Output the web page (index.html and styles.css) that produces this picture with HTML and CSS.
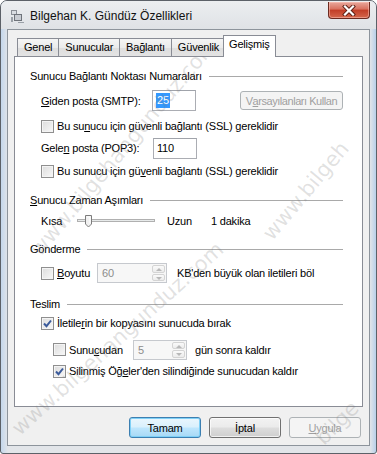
FILE: index.html
```html
<!DOCTYPE html>
<html lang="tr">
<head>
  <meta charset="UTF-8" />
  <title>Bilgehan K. Gündüz Özellikleri</title>
  <link rel="stylesheet" href="styles.css">
</head>
<body>
  <div class="window">
    <!-- Title bar -->
    <div class="titlebar">
      <svg class="titlebar__icon" width="16" height="16" viewBox="0 0 16 16">
        <rect x="1" y="2" width="6" height="5" fill="#8a8f96"/>
        <rect x="2" y="3" width="4" height="3" fill="#d9dde2"/>
        <rect x="4" y="6" width="8" height="7" fill="#6e737a"/>
        <rect x="5" y="7" width="6" height="5" fill="#c8ccd2"/>
        <rect x="1" y="9" width="2" height="5" fill="#9aa0a7"/>
        <rect x="8" y="14" width="6" height="1" fill="#9aa0a7"/>
      </svg>
      <span class="titlebar__text">Bilgehan K. Gündüz Özellikleri</span>
      <div class="titlebar__close">
        <svg width="14" height="11" viewBox="0 0 14 11">
          <path d="M3 1.5 L11 9.5 M11 1.5 L3 9.5" stroke="#5a1d12" stroke-width="4" stroke-linecap="square"/>
          <path d="M3 1.5 L11 9.5 M11 1.5 L3 9.5" stroke="#ffffff" stroke-width="2.2" stroke-linecap="square"/>
        </svg>
      </div>
    </div>

    <!-- Client area -->
    <div class="client">
      <div class="tabs">
        <div class="tab">Genel</div>
        <div class="tab">Sunucular</div>
        <div class="tab">Bağlantı</div>
        <div class="tab">Güvenlik</div>
        <div class="tab tab--active">Gelişmiş</div>
      </div>

      <div class="panel">
        <!-- Port numbers -->
        <div class="group group--first">Sunucu Bağlantı Noktası Numaraları</div>
        <div class="row row--port">
          <span class="row__label"><u>G</u>iden posta (SMTP):</span>
          <span class="field field--port"><span class="field__sel">25</span></span>
          <span class="btn btn--disabled btn--defaults">V<u>a</u>rsayılanları Kullan</span>
        </div>
        <div class="row row--check">
          <span class="check"></span>
          <span>Bu su<u>n</u>ucu için güvenli bağlantı (SSL) gereklidir</span>
        </div>
        <div class="row row--port2">
          <span class="row__label">Gele<u>n</u> posta (POP3):</span>
          <span class="field field--port">110</span>
        </div>
        <div class="row row--check2">
          <span class="check"></span>
          <span>Bu sunucu için gü<u>v</u>enli bağlantı (SSL) gereklidir</span>
        </div>

        <!-- Timeouts -->
        <div class="group group--timeout"><span><u>S</u>unucu Zaman Aşımları</span></div>
        <div class="row row--slider">
          <span class="slider__min">Kısa</span>
          <svg class="slider" width="82" height="14" viewBox="0 0 82 14">
            <rect x="1.5" y="5.5" width="77" height="2" fill="#e7eaea" stroke="#b0b0b0" stroke-width="1"/>
            <path d="M9.5 1.5 H15.5 V10 L12.5 13 L9.5 10 Z" fill="#f1f1f1" stroke="#7c7c7c" stroke-width="1"/>
            <path d="M11 3 H14 V9.5" fill="none" stroke="#ffffff" stroke-width="1"/>
          </svg>
          <span class="slider__max">Uzun</span>
          <span class="slider__value">1 dakika</span>
        </div>

        <!-- Sending -->
        <div class="group group--send">Gönderme</div>
        <div class="row row--size">
          <span class="check"></span>
          <span class="row__text--size"><u>B</u>oyutu</span>
          <span class="spin spin--size">
            <span class="spin__value">60</span>
            <span class="spin__buttons"><span class="spin__up"></span><span class="spin__down"></span></span>
          </span>
          <span class="row__after">KB'den büyük olan iletileri böl</span>
        </div>

        <!-- Delivery -->
        <div class="group group--deliver">Teslim</div>
        <div class="row row--keep">
          <span class="check check--on"></span>
          <span>İletile<u>r</u>in bir kopyasını sunucuda bırak</span>
        </div>
        <div class="row row--days">
          <span class="check"></span>
          <span class="row__text--days">Sunu<u>c</u>udan</span>
          <span class="spin spin--days">
            <span class="spin__value">5</span>
            <span class="spin__buttons"><span class="spin__up"></span><span class="spin__down"></span></span>
          </span>
          <span class="row__after--days">gün sonra kaldır</span>
        </div>
        <div class="row row--deleted">
          <span class="check check--on"></span>
          <span>Silinmiş Öğ<u>e</u>ler'den silindiğinde sunucudan kaldır</span>
        </div>
      </div>

      <div class="actions">
        <span class="btn btn--default">Tamam</span>
        <span class="btn">İptal</span>
        <span class="btn btn--disabled"><u>U</u>ygula</span>
      </div>
    </div>

    <!-- Watermark -->
    <span class="watermark watermark--a">www.bilgehangunduz.com</span>
    <span class="watermark watermark--b">www.bilgehangunduz.com</span>
    <span class="watermark watermark--c">www.bilgeh</span>
    <span class="watermark watermark--d">bilge</span>
  </div>
</body>
</html>
```

FILE: styles.css
```css
/* Base */
* {
  box-sizing: border-box;
}
body {
  margin: 0;
  width: 377px;
  height: 454px;
  overflow: hidden;
  font-family: "Liberation Sans", Arial, sans-serif;
  font-size: 11px;
  letter-spacing: -0.2px;
  color: #000;
  background: #ffffff;
}
u {
  text-decoration: underline;
  text-underline-offset: 1px;
}

/* Window frame */
.window {
  position: relative;
  width: 377px;
  height: 454px;
  display: flex;
  flex-direction: column;
  padding: 0 6px 7px;
  border: 1px solid #5c6168;
  border-radius: 7px 7px 3px 3px;
  background: linear-gradient(90deg, #c4d7ec 0, #e2e5e9 7px, #e2e5e9 369px, #b9d0ea 100%);
  overflow: hidden;
}
.titlebar {
  height: 28px;
  display: flex;
  align-items: center;
  margin: 0 -6px;
  padding: 0 6px 0 9px;
  background: linear-gradient(#eceef0, #dfe2e6);
}
.titlebar__icon {
  flex: none;
  margin-top: 2px;
}
.titlebar__text {
  margin-left: 4px;
  margin-top: 2px;
  font-size: 12px;
  letter-spacing: 0;
  color: #111;
}
.titlebar__close {
  margin-left: auto;
  margin-bottom: 9px;
  width: 42px;
  height: 17px;
  display: flex;
  align-items: center;
  justify-content: center;
  border: 1px solid #6b2a20;
  border-top: none;
  border-radius: 0 0 4px 4px;
  background: linear-gradient(#e8a89c, #d8705e 45%, #c23d26 50%, #d4674c);
  box-shadow: inset 0 0 0 1px rgba(255, 200, 190, 0.5);
}

/* Client area */
.client {
  flex: 1;
  display: flex;
  flex-direction: column;
  padding: 5px 6px 7px;
  border: 1px solid #8d949c;
  background: #f0f0f0;
}

/* Tabs */
.tabs {
  height: 21px;
  display: flex;
  align-items: flex-end;
  padding-left: 3px;
  position: relative;
  z-index: 1;
}
.tab {
  height: 18px;
  padding: 0 6px;
  margin-right: -1px;
  line-height: 17px;
  border: 1px solid #898c95;
  border-bottom: none;
  background: linear-gradient(#f5f5f5, #ebebeb 50%, #dedede 50%, #e3e3e3);
  color: #000;
}
.tab--active {
  height: 22px;
  margin-left: -2px;
  margin-bottom: -1px;
  padding: 0 5px;
  line-height: 17px;
  background: #ffffff;
}

/* Tab panel */
.panel {
  height: 351px;
  display: flex;
  flex-direction: column;
  padding: 10px 19px 0 15px;
  border: 1px solid #898c95;
  background: #ffffff;
}

/* Group headings with a rule */
.group {
  height: 16px;
  display: flex;
  align-items: center;
  gap: 7px;
  line-height: 16px;
  white-space: nowrap;
}
.group::after {
  content: "";
  flex: 1;
  height: 1px;
  background: #a9a9a9;
}
.group--first { margin-top: 1px; }
.group--timeout { margin-top: 11px; }
.group--send { margin-top: 10px; }
.group--deliver { margin-top: 13px; }

/* Rows */
.row {
  display: flex;
  align-items: center;
  padding-left: 11px;
  white-space: nowrap;
  height: 20px;
}
.row--port { height: 23px; margin-top: 5px; }
.row--check { margin-top: 4px; }
.row--port2 { height: 22px; margin-top: 1px; }
.row--check2 { margin-top: 2px; }
.row--slider { margin-top: 3px; }
.row--size { margin-top: 6px; }
.row--keep { margin-top: 1px; }
.row--days { height: 21px; margin-top: 6px; padding-left: 23px; }
.row--deleted { margin-top: 1px; padding-left: 23px; }

.row__label {
  width: 112px;
}
.row__text--size {
  width: 40px;
}
.row__text--days {
  width: 64px;
}
.row__after {
  margin-left: 10px;
}
.row__after--days {
  margin-left: 8px;
}

/* Checkbox */
.check {
  flex: none;
  width: 13px;
  height: 13px;
  margin-right: 3px;
  border: 1px solid #8f8f8f;
  background: linear-gradient(135deg, #dcdcdc, #f8f8f8);
  box-shadow: inset 0 0 0 1px #f4f4f4;
}
.check--on {
  background: url("data:image/svg+xml,%3Csvg xmlns='http://www.w3.org/2000/svg' width='11' height='11'%3E%3Cpath d='M2 5.5 L4.5 8.2 L9 2.5' fill='none' stroke='%233b5b9b' stroke-width='2'/%3E%3C/svg%3E") center no-repeat, linear-gradient(135deg, #dcdcdc, #f8f8f8);
}

/* Edit fields */
.field {
  height: 21px;
  display: flex;
  align-items: center;
  padding-left: 3px;
  border: 1px solid #abadb3;
  border-top-color: #a0a3aa;
  background: #ffffff;
}
.field--port {
  width: 44px;
}
.field__sel {
  background: #3399ff;
  color: #ffffff;
  padding: 0 1px;
  line-height: 15px;
}

/* Spin boxes (disabled) */
.spin {
  height: 20px;
  display: flex;
  border: 1px solid #c6c9ce;
  background: #f7f7f7;
  color: #8c8c8c;
}
.spin--size {
  width: 70px;
}
.spin--days {
  width: 54px;
}
.spin__value {
  flex: 1;
  padding-left: 4px;
  line-height: 18px;
}
.spin__buttons {
  width: 15px;
  display: flex;
  flex-direction: column;
  gap: 1px;
  padding: 1px;
}
.spin__up,
.spin__down {
  flex: 1;
  position: relative;
  border: 1px solid #d4d4d4;
  border-radius: 2px;
  background: linear-gradient(#fafafa, #ececec);
}
.spin__up::after,
.spin__down::after {
  content: "";
  position: absolute;
  left: 3px;
  top: 2px;
  border-left: 3px solid transparent;
  border-right: 3px solid transparent;
}
.spin__up::after {
  border-bottom: 3px solid #b8b8b8;
}
.spin__down::after {
  border-top: 3px solid #b8b8b8;
}

/* Slider */
.slider__min {
  width: 35px;
}
.slider {
  margin-right: 9px;
}
.slider__max {
  width: 44px;
}

/* Buttons */
.btn {
  width: 72px;
  height: 21px;
  display: flex;
  align-items: center;
  justify-content: center;
  border: 1px solid #707070;
  border-radius: 3px;
  background: linear-gradient(#f2f2f2, #ebebeb 48%, #dddddd 52%, #cfcfcf);
  box-shadow: inset 0 0 0 1px rgba(255, 255, 255, 0.7);
}
.btn--default {
  border-color: #3c7fb1;
  background: linear-gradient(#eaf6fd, #d9f0fc 48%, #bee6fd 52%, #a7d9f5);
  box-shadow: inset 0 0 0 1px #7fd0f6;
}
.btn--disabled {
  border-color: #adb2b5;
  background: #f4f4f4;
  box-shadow: none;
  color: #a0a0a0;
}
.btn--defaults {
  width: 104px;
  height: 19px;
  margin-left: 44px;
  letter-spacing: -0.45px;
}
.actions {
  display: flex;
  justify-content: flex-end;
  gap: 8px;
  margin-top: 10px;
  padding-right: 2px;
}

/* Diagonal watermark over the screenshot */
.watermark {
  position: absolute;
  font-family: "DejaVu Sans", sans-serif;
  font-size: 21px;
  letter-spacing: 0;
  color: rgba(120, 120, 120, 0.22);
  white-space: nowrap;
  pointer-events: none;
  transform-origin: 0 50%;
}
.watermark--a { left: 34px; top: 240px; transform: rotate(-50deg); }
.watermark--b { left: 14px; top: 418px; transform: rotate(-42deg); }
.watermark--c { left: 266px; top: 224px; transform: rotate(-50deg); }
.watermark--d { left: 318px; top: 428px; transform: rotate(-45deg); }
```
